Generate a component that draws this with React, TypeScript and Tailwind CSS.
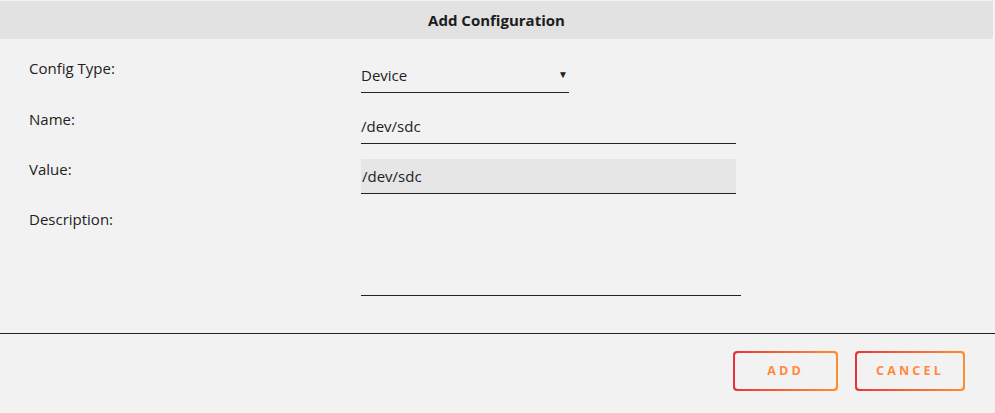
import { useState } from "react";

const FONT = "font-['Open_Sans',_'Liberation_Sans',_sans-serif]";

function GradientButton({ label, width }: { label: string; width: string }) {
  return (
    <button
      type="button"
      className={`rounded-[4px] bg-linear-to-r from-[#e8313a] to-[#ff8c2e] p-[2px] ${width}`}
    >
      <span className="flex h-[36px] items-center justify-center rounded-[3px] bg-[#f2f2f2] text-[12.5px] font-bold tracking-[3.2px] text-[#ff8a3d]">
        {label}
      </span>
    </button>
  );
}

export default function App() {
  const [configType, setConfigType] = useState("Device");
  const [name, setName] = useState("/dev/sdc");
  const [description, setDescription] = useState("");

  return (
    <div className={`h-[413px] w-[995px] bg-[#f2f2f2] text-[#222] ${FONT}`}>
      {/* Title bar */}
      <div className="pt-[1px] pr-[2px]">
        <div className="flex h-[38px] items-center justify-center rounded-br-[3px] bg-[#e2e2e2] text-[15px] font-bold text-[#1c1c1c]">
          Add Configuration
        </div>
      </div>

      {/* Form */}
      <div className="grid grid-cols-[332px_1fr] gap-y-[15px] pt-[19px] pl-[29px] text-[15px]">
        <label className="mb-[1px] leading-[20px]">Config Type:</label>
        <div className="relative mb-[1px] flex h-[35px] w-[208px] items-center border-b border-[#222]">
          <select
            value={configType}
            onChange={(e) => setConfigType(e.target.value)}
            className="h-full w-full appearance-none bg-transparent pr-5 outline-none"
          >
            <option>Device</option>
            <option>Environment</option>
            <option>Volume</option>
          </select>
          <span className="pointer-events-none absolute right-[1px] top-[9px] text-[10px]">▼</span>
        </div>

        <label className="leading-[20px]">Name:</label>
        <input
          value={name}
          onChange={(e) => setName(e.target.value)}
          className="h-[35px] w-[375px] border-b border-[#222] bg-transparent outline-none"
        />

        <label className="leading-[20px]">Value:</label>
        <div className="flex h-[35px] w-[375px] items-center border-b border-[#222] bg-[#e6e6e6] pl-[1px] pt-[1px]">
          /dev/sdc
        </div>

        <label className="leading-[20px]">Description:</label>
        <textarea
          value={description}
          onChange={(e) => setDescription(e.target.value)}
          className="h-[87px] w-[380px] resize-none border-b border-[#222] bg-transparent outline-none"
        />
      </div>

      {/* Footer */}
      <div className="mt-[37px] border-t border-[#222]">
        <div className="flex justify-end gap-[17px] pt-[17px] pr-[30px]">
          <GradientButton label="ADD" width="w-[105px]" />
          <GradientButton label="CANCEL" width="w-[110px]" />
        </div>
      </div>
    </div>
  );
}
